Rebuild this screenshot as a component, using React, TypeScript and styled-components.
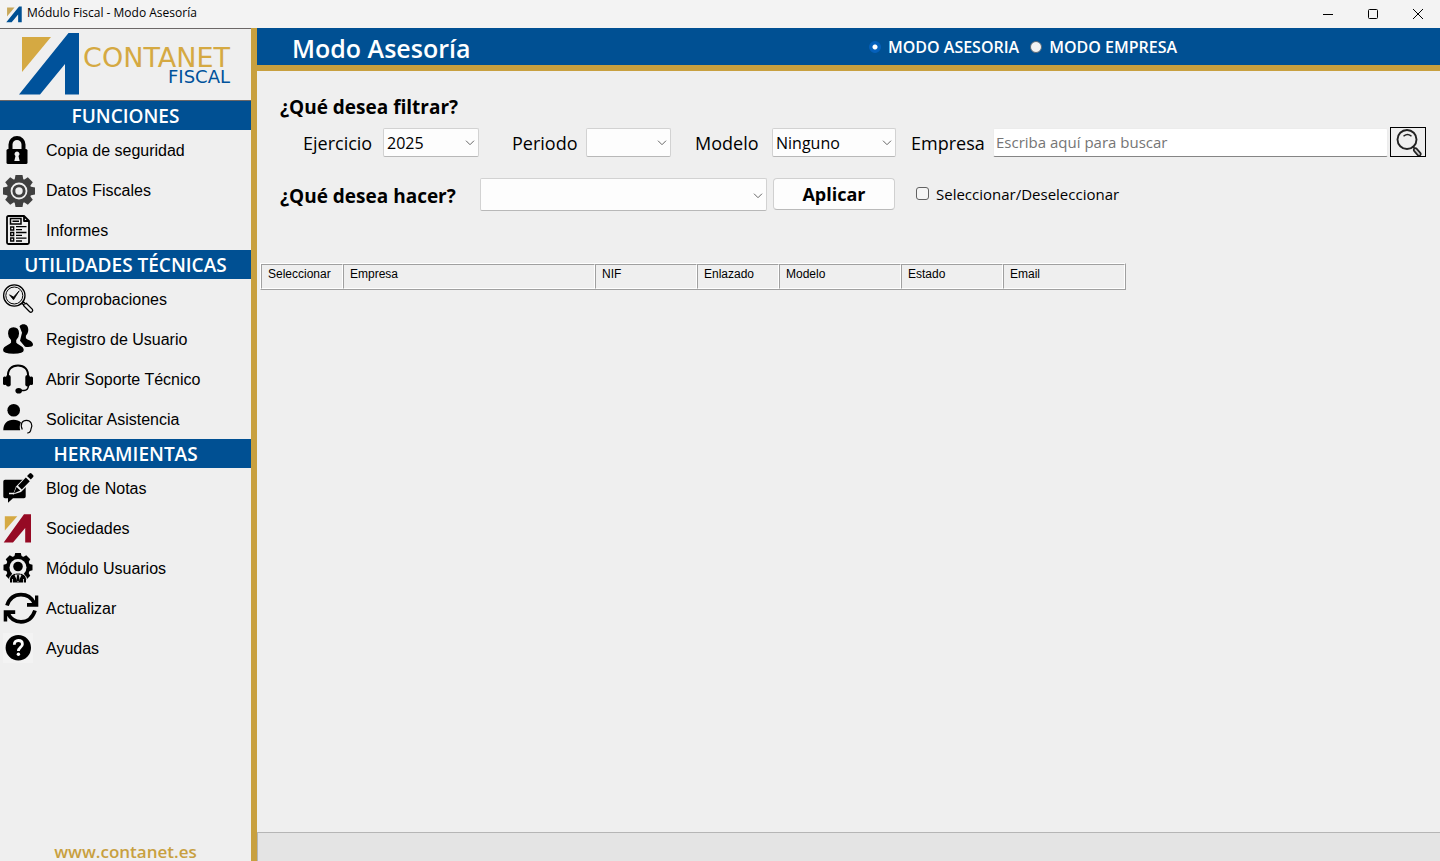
import React from 'react';
import styled, { createGlobalStyle } from 'styled-components';

const INK = '#000';
const PAPER = '#efefef';
const BLUE = '#005093';
const GOLD = '#c8a03f';
const UI = '"Segoe UI", "Open Sans", "Noto Sans", sans-serif';
const CLASSIC = '"Liberation Sans", Arial, sans-serif';

const GlobalStyle = createGlobalStyle`
  *, *::before, *::after { box-sizing: border-box; }
  body { margin: 0; background: ${PAPER}; color: ${INK}; font-family: ${UI}; }
  button, input, select { font: inherit; color: inherit; margin: 0; }
`;

const Window = styled.div`
  display: flex;
  flex-direction: column;
  height: 100vh;
  overflow: hidden;
`;

const TitleBar = styled.header`
  display: flex;
  align-items: center;
  height: 28px;
  flex: none;
  padding-left: 6px;
  background: #f3f3f3;
`;

const WindowTitle = styled.span`
  flex: 1;
  padding: 0 0 2px 5px;
  font-size: 12px;
  line-height: 16px;
  white-space: nowrap;
`;

const WindowButton = styled.button`
  display: grid;
  place-items: center;
  width: 45px;
  height: 24px;
  padding: 0;
  border: 0;
  background: none;
`;

const Body = styled.div`
  display: flex;
  flex: 1;
  min-height: 0;
`;

const Sidebar = styled.aside`
  display: flex;
  flex-direction: column;
  flex: none;
  width: 257px;
  border-right: 6px solid ${GOLD};
`;

const Brand = styled.div`
  display: flex;
  height: 73px;
  padding: 3px 0 0 18px;
  border-top: 1px solid #6b6767;
  border-bottom: 1px solid #6b6767;
`;

const BrandWords = styled.div`
  display: flex;
  flex-direction: column;
  align-items: flex-end;
  padding-top: 15px;
  width: 150px;
`;

const BrandName = styled.span`
  font: 27px/22px "DejaVu Sans", sans-serif;
  color: #d5a942;
`;

const BrandProduct = styled.span`
  font: 18px/16px "DejaVu Sans", sans-serif;
  color: #00529b;
`;

const GroupTitle = styled.h2`
  margin: 0;
  height: 29px;
  background: ${BLUE};
  color: #fff;
  font-size: 19px;
  font-weight: 600;
  line-height: 30px;
  text-align: center;
  white-space: nowrap;
`;

const NavList = styled.ul`
  margin: 0;
  padding: 0;
  list-style: none;
`;

const NavButton = styled.button`
  display: flex;
  align-items: center;
  gap: 6px;
  width: 100%;
  height: 40px;
  padding: 0;
  border: 0;
  background: none;
  font-family: ${CLASSIC};
  font-size: 16px;
  text-align: left;
`;

const NavText = styled.span`
  padding-top: 2px;
`;

const SiteLink = styled.a`
  margin-top: auto;
  height: 20px;
  color: ${GOLD};
  font-size: 17px;
  font-weight: 600;
  line-height: 22px;
  text-align: center;
  text-decoration: none;
`;

const Main = styled.main`
  display: flex;
  flex-direction: column;
  flex: 1;
  min-width: 0;
`;

const ModeBar = styled.div`
  display: grid;
  grid-template-columns: 577px auto 1fr;
  align-items: center;
  height: 43px;
  padding-left: 35px;
  border-bottom: 6px solid ${GOLD};
  background: ${BLUE};
  color: #fff;
`;

const PageTitle = styled.h1`
  margin: 0;
  padding-top: 3px;
  font-size: 25px;
  font-weight: 600;
  line-height: 34px;
`;

const ModeGroup = styled.div`
  display: flex;
  gap: 11px;
`;

const ModeLabel = styled.label`
  display: flex;
  align-items: center;
  gap: 7px;
  font-size: 16px;
  font-weight: 600;
  line-height: 20px;
  white-space: nowrap;
`;

const Radio = styled.input`
  appearance: none;
  width: 12px;
  height: 12px;
  border: 1px solid #5d6a75;
  border-radius: 50%;
  background: #f3f3f3;
  &:checked {
    border-color: #0560bb;
    background: radial-gradient(circle, #fff 2px, #0560bb 3px);
  }
`;

const Panel = styled.section`
  display: flex;
  flex-direction: column;
  padding: 21px 14px 0 23px;
`;

const Question = styled.h3`
  margin: 0;
  font-size: 19px;
  font-weight: 700;
  line-height: 30px;
  white-space: nowrap;
`;

const FilterRow = styled.div`
  display: flex;
  align-items: center;
  height: 30px;
  margin-top: 5px;
  padding-left: 23px;
`;

const ActionRow = styled.div`
  display: flex;
  align-items: flex-start;
  height: 33px;
  margin-top: 21px;
`;

const ActionQuestion = styled(Question)`
  width: 200px;
  padding-top: 3px;
`;

const FieldLabel = styled.label<{ $width: number }>`
  flex: none;
  width: ${(p) => p.$width}px;
  padding-top: 2px;
  font-size: 18px;
  line-height: 26px;
  white-space: nowrap;
`;

const SelectBox = styled.span<{ $width: number; $gap?: number; $tall?: boolean }>`
  position: relative;
  flex: none;
  width: ${(p) => p.$width}px;
  height: ${(p) => (p.$tall ? 33 : 29)}px;
  margin-right: ${(p) => p.$gap ?? 0}px;
`;

const Select = styled.select`
  appearance: none;
  width: 100%;
  height: 100%;
  padding: 2px 20px 0 3px;
  border: 1px solid #d2d2d2;
  border-bottom-color: #b8b8b8;
  border-radius: 2px;
  background: #fdfdfd;
  font-size: 16px;
`;

const Arrow = styled.svg`
  position: absolute;
  right: 4px;
  top: 50%;
  margin-top: -2px;
  pointer-events: none;
`;

const SearchInput = styled.input`
  flex: 1;
  min-width: 0;
  height: 29px;
  padding: 0 2px;
  border: 1px solid #ececec;
  border-bottom-color: #858585;
  border-radius: 2px;
  background: #fff;
  font-size: 15px;
  &::placeholder { color: #757575; opacity: 1; }
`;

const SearchButton = styled.button`
  flex: none;
  width: 36px;
  height: 30px;
  margin-left: 2px;
  padding: 0;
  border: 1px solid #000;
  background: ${PAPER};
  line-height: 0;
`;

const ApplyButton = styled.button`
  width: 122px;
  height: 32px;
  margin-left: 6px;
  padding: 0;
  border: 1px solid #d0d0d0;
  border-bottom-color: #bababa;
  border-radius: 4px;
  background: #fdfdfd;
  font-size: 18px;
  font-weight: 700;
`;

const CheckLabel = styled.label`
  display: flex;
  align-items: center;
  gap: 7px;
  height: 31px;
  margin-left: 21px;
  font-size: 15px;
  line-height: 20px;
  white-space: nowrap;
`;

const CheckBox = styled.input`
  appearance: none;
  width: 13px;
  height: 13px;
  border: 1px solid #626262;
  border-radius: 3px;
  background: #f5f5f5;
  &:checked { background: #0560bb; }
`;

const TableArea = styled.div`
  flex: 1;
  min-height: 0;
  padding: 52px 0 0 3px;
  overflow: auto;
`;

const Grid = styled.table`
  width: 866px;
  table-layout: fixed;
  border-collapse: separate;
  border-spacing: 0;
  border: 1px solid;
  border-color: #fff #a0a0a0 #a0a0a0 #fff;
  font-family: ${CLASSIC};
  font-size: 12px;
`;

const HeadCell = styled.th<{ $width: number }>`
  width: ${(p) => p.$width}px;
  height: 25px;
  padding: 2px 6px 0;
  border: 1px solid;
  border-color: #a0a0a0 #fff #fff #a0a0a0;
  font-weight: 400;
  line-height: 14px;
  text-align: left;
  vertical-align: top;
`;

const StatusBar = styled.footer`
  flex: none;
  height: 29px;
  border-top: 1px solid #b5b5b5;
  border-left: 1px solid #b5b5b5;
  background: #e4e4e4;
`;

const TEETH = [0, 45, 90, 135, 180, 225, 270, 315];

const Mark = ({ leg, sail, width, height }: { leg: string; sail: string; width: number; height: number }) => (
  <svg width={width} height={height} viewBox="0 0 62 64" aria-hidden="true">
    <path fill={sail} d="M4 5h29L4 40z" />
    <path fill={leg} d="M1 62.500 50.500 1H61v61.500H47V32L22 62.500z" />
  </svg>
);

const Chevron = () => (
  <Arrow width="10" height="6" viewBox="0 0 10 6" fill="none" stroke="#666" aria-hidden="true">
    <path d="M1 .7 5 4.700 9 .7" />
  </Arrow>
);

const icons: Record<string, React.ReactNode> = {
  lock: (
    <>
      <path d="M10.500 20v-5.500a6.500 6.500 0 0 1 13 0V20" fill="none" stroke={INK} strokeWidth="4" />
      <rect x="6.500" y="19" width="21" height="15" rx="1.500" />
      <path fill={PAPER} d="M17 21.500a2.500 2.500 0 0 1 1.500 4.500l1.200 5h-5.400l1.200-5a2.500 2.500 0 0 1 1.500-4.500z" />
    </>
  ),
  gear: (
    <g fill="#404040">
      {TEETH.map((a) => (
        <path key={a} transform={`rotate(${a} 19 21)`} d="M14.600 10 15.500 5h7L23.400 10z" />
      ))}
      <circle cx="19" cy="21" r="12.500" />
      <circle cx="19" cy="21" r="7.500" fill="none" stroke={PAPER} strokeWidth="1.800" />
      <circle cx="19" cy="21" r="3.700" fill={PAPER} />
    </g>
  ),
  report: (
    <g fill="none" stroke={INK} strokeWidth="1.500">
      <path strokeWidth="1.800" strokeLinejoin="round" d="M24 6H8.500Q7 6 7 7.500v25Q7 34 8.500 34H27.500q1.500 0 1.500-1.500V11zM24 6v5h5" />
      <path d="M10.500 8.500h10.500v5.500H10.500zM12.500 11.300h6.500" />
      <path d="M10.700 17h3v3h-3zM10.700 22.500h3v3h-3zM10.700 28h3v3h-3z" strokeWidth="1.300" />
      <path d="M16 16.700h10.500M16 19.700h6M16 22.500h10.500M16 25.300h6M16 28.200h10.500M16 31h6" strokeWidth="1.300" />
    </g>
  ),
  check: (
    <g fill="none" stroke={INK} strokeWidth="1.300">
      <circle cx="14.300" cy="16.500" r="10.700" />
      <circle cx="14.300" cy="16.500" r="8.500" strokeWidth="1" />
      <path d="m9.500 15.800 4 5 5.700-9-5.600 6.300z" fill={INK} strokeWidth=".8" />
      <path d="m21.800 24.800 1.800-1.800 1.800 1.800 1-.6 6 6.200q.8 1.400-.4 2.400-1.200.9-2.400 0l-6-6.200.4-1z" />
    </g>
  ),
  users: (
    <>
      <path d="M23.500 5.300c3 0 4.800 2.200 4.800 5.400 0 2.600-1.100 4.600-2.400 6v2.500c1.300 1.800 7 2.300 7.100 6.300 0 2.500-3.500 2.800-8 2.300l-5-6 2-8-2.500-6.500c1.200-1.500 2.500-2 4-2z" />
      <path
        stroke={PAPER}
        strokeWidth="1.500"
        d="M13.500 7.500c4 0 6.300 2.700 6.300 7 0 3-1.300 5.300-2.800 6.800v2c1.500 2.300 7.500 2.500 7.500 7.700 0 3-4.500 4.500-11 4.500s-11.200-1.500-11.200-4.500c0-5.200 6.500-5.400 8-7.700v-2c-1.600-1.500-3-3.800-3-6.800 0-4.300 2.400-7 6.200-7z"
      />
    </>
  ),
  headset: (
    <g fill="none" stroke={INK}>
      <path d="M8 17.500C7.500 10.500 11.500 6.500 18 6.500s10.500 4 10 11" strokeWidth="2" />
      <path d="M28.500 26.500q-.5 5-4.500 5h-5" strokeWidth="1.500" />
      <rect x="3" y="17.500" width="3.500" height="8.500" rx="1.500" fill={INK} stroke="none" />
      <rect x="6" y="16" width="4.700" height="11.500" rx="2" fill={INK} stroke="none" />
      <rect x="29.500" y="17.500" width="3.500" height="8.500" rx="1.500" fill={INK} stroke="none" />
      <rect x="25.300" y="16" width="4.700" height="11.500" rx="2" fill={INK} stroke="none" />
      <ellipse cx="18.700" cy="31.700" rx="3.300" ry="2.800" fill={INK} stroke="none" />
    </g>
  ),
  assist: (
    <>
      <circle cx="13.700" cy="11.300" r="6.300" />
      <path d="M3.300 31.300c0-7 4-10.600 10.200-10.600 3.300 0 5.700 1 7.500 2.700-1.500 2.300-1.500 5-.8 7.900z" />
      <path d="M22.300 30.500c-2.500-5.500 0-9.200 4.200-9.200s6.700 4.200 4.500 8.700c-.3 2.600-1 4-3.800 4" fill="none" stroke={INK} strokeWidth="1.200" />
    </>
  ),
  note: (
    <>
      <path d="M5 11.800h19q1.700 0 1.700 1.700v15q0 1.700-1.700 1.700H13l-5 4.500v-4.500H5q-1.700 0-1.700-1.700v-15q0-1.700 1.700-1.700z" />
      <path d="m13 26.500 3-8L28 6l6 5-13 13z" fill={PAPER} />
      <path d="m13.800 25.500 2.700-6.500 3.800 3.500zM18 17.800 25.800 9.500l4 3.700-8 8.300zM27 8l2.500-2.500q1-.8 2 0l1.500 1.500q1 1 .2 2l-2.400 2.600z" />
      <path d="M9 25.500h5" stroke={PAPER} strokeWidth="1.500" />
    </>
  ),
  company: (
    <>
      <path fill="#d5a942" d="M4.800 8.300h12.500L4.800 22.500z" />
      <path fill="#960a24" d="M3.700 34.500 24 6.300h7v28.200h-5.800V20L13 34.500z" />
    </>
  ),
  module: (
    <>
      {TEETH.filter((a) => a !== 180).map((a) => (
        <path key={a} transform={`rotate(${a} 18 19.500)`} d="M14 9.500 15.200 5h5.600L22 9.500z" />
      ))}
      <circle cx="18" cy="19.500" r="12" />
      <circle cx="18" cy="19.500" r="8.500" fill={PAPER} />
      <path d="M9.500 35v-3.500c0-4 3.500-6.500 8.500-6.500s8.500 2.500 8.500 6.500V35z" stroke={PAPER} strokeWidth="1" />
      <circle cx="18" cy="18.500" r="4.800" />
      <path d="M15 27 18 34l3-7zM12.500 31v4M23.500 31v4" fill={PAPER} stroke={PAPER} strokeWidth=".8" />
      <path d="m17 27.500 1-1 1 1 .6 4.500-1.600 2-1.600-2z" />
    </>
  ),
  refresh: (
    <>
      <g fill="none" stroke={INK} strokeWidth="3.800">
        <path d="M7 17.500C9.500 10 14.500 6.700 21 6.700c6 0 10.500 2.800 13.200 8.300" />
        <path d="M35 22.500c-2.500 7.500-7.500 11.300-14 11.300-6 0-10.500-3-13.200-8.800" />
      </g>
      <path d="M38.300 7.500v11.200H27v-3.600h5.200L35 12.500V7.500zM3.700 33.500V22.300h11.500v3.600H10l-2.800 2.600v5z" />
    </>
  ),
  help: (
    <>
      <path fill="#f3f3f3" d="M3 5h30v30H3z" />
      <circle cx="18.300" cy="19.700" r="12.700" />
      <path d="M14.300 16.800c0-2.800 1.700-4.300 4-4.300s4.100 1.400 4.100 3.700c0 3-4 3.200-4 6.800" fill="none" stroke="#fff" strokeWidth="2.800" />
      <circle cx="18.400" cy="26.300" r="1.700" fill="#fff" />
    </>
  ),
};

const NavIcon = ({ name }: { name: string }) => (
  <svg width="40" height="40" viewBox="0 0 40 40" aria-hidden="true">
    {icons[name]}
  </svg>
);

const GROUPS = [
  {
    title: 'FUNCIONES',
    items: [
      ['lock', 'Copia de seguridad'],
      ['gear', 'Datos Fiscales'],
      ['report', 'Informes'],
    ],
  },
  {
    title: 'UTILIDADES TÉCNICAS',
    items: [
      ['check', 'Comprobaciones'],
      ['users', 'Registro de Usuario'],
      ['headset', 'Abrir Soporte Técnico'],
      ['assist', 'Solicitar Asistencia'],
    ],
  },
  {
    title: 'HERRAMIENTAS',
    items: [
      ['note', 'Blog de Notas'],
      ['company', 'Sociedades'],
      ['module', 'Módulo Usuarios'],
      ['refresh', 'Actualizar'],
      ['help', 'Ayudas'],
    ],
  },
];

const COLUMNS: [string, number][] = [
  ['Seleccionar', 82],
  ['Empresa', 252],
  ['NIF', 102],
  ['Enlazado', 82],
  ['Modelo', 122],
  ['Estado', 102],
  ['Email', 122],
];

export default function App() {
  return (
    <Window>
      <GlobalStyle />
      <TitleBar>
        <Mark leg={BLUE} sail="#c8a85a" width={16} height={17} />
        <WindowTitle>Módulo Fiscal - Modo Asesoría</WindowTitle>
        <WindowButton aria-label="Minimizar">
          <svg width="12" height="12" stroke="#000"><path d="M1 6.500h10" /></svg>
        </WindowButton>
        <WindowButton aria-label="Maximizar">
          <svg width="12" height="12" stroke="#000" fill="none"><rect x="1.500" y="1.500" width="9" height="9" rx="1" /></svg>
        </WindowButton>
        <WindowButton aria-label="Cerrar">
          <svg width="12" height="12" stroke="#000"><path d="m1 1 10 10M11 1 1 11" /></svg>
        </WindowButton>
      </TitleBar>
      <Body>
        <Sidebar>
          <Brand>
            <Mark leg="#00529b" sail="#d5a942" width={62} height={64} />
            <BrandWords>
              <BrandName>CONTANET</BrandName>
              <BrandProduct>FISCAL</BrandProduct>
            </BrandWords>
          </Brand>
          {GROUPS.map((group) => (
            <nav key={group.title} aria-label={group.title}>
              <GroupTitle>{group.title}</GroupTitle>
              <NavList>
                {group.items.map(([icon, text]) => (
                  <li key={text}>
                    <NavButton>
                      <NavIcon name={icon} />
                      <NavText>{text}</NavText>
                    </NavButton>
                  </li>
                ))}
              </NavList>
            </nav>
          ))}
          <SiteLink href="#contanet">www.contanet.es</SiteLink>
        </Sidebar>
        <Main>
          <ModeBar>
            <PageTitle>Modo Asesoría</PageTitle>
            <ModeGroup role="radiogroup" aria-label="Modo">
              <ModeLabel>
                <Radio type="radio" name="modo" defaultChecked />
                MODO ASESORIA
              </ModeLabel>
              <ModeLabel>
                <Radio type="radio" name="modo" />
                MODO EMPRESA
              </ModeLabel>
            </ModeGroup>
          </ModeBar>
          <Panel>
            <Question>¿Qué desea filtrar?</Question>
            <FilterRow>
              <FieldLabel htmlFor="ejercicio" $width={80}>Ejercicio</FieldLabel>
              <SelectBox $width={96} $gap={33}>
                <Select id="ejercicio"><option>2025</option></Select>
                <Chevron />
              </SelectBox>
              <FieldLabel htmlFor="periodo" $width={74}>Periodo</FieldLabel>
              <SelectBox $width={85} $gap={24}>
                <Select id="periodo"><option /></Select>
                <Chevron />
              </SelectBox>
              <FieldLabel htmlFor="modelo" $width={77}>Modelo</FieldLabel>
              <SelectBox $width={124} $gap={15}>
                <Select id="modelo"><option>Ninguno</option></Select>
                <Chevron />
              </SelectBox>
              <FieldLabel htmlFor="empresa" $width={82}>Empresa</FieldLabel>
              <SearchInput id="empresa" type="text" placeholder="Escriba aquí para buscar" />
              <SearchButton aria-label="Buscar">
                <svg width="34" height="28" viewBox="0 0 34 28" fill="none" stroke="#222" strokeLinecap="round">
                  <circle cx="16" cy="11.500" r="9.500" strokeWidth="1.900" />
                  <path d="M13 7.800q3.500-2.800 7 0" strokeWidth="1.500" />
                  <path d="m22 18.500 1.500 2" strokeWidth="1.500" />
                  <path d="m24.500 22 3.500 4" strokeWidth="5" />
                  <path d="m24.500 22 3.500 4" strokeWidth="1.800" stroke="#ccc" />
                </svg>
              </SearchButton>
            </FilterRow>
            <ActionRow>
              <ActionQuestion as="label" htmlFor="accion">¿Qué desea hacer?</ActionQuestion>
              <SelectBox $width={287} $tall>
                <Select id="accion"><option /></Select>
                <Chevron />
              </SelectBox>
              <ApplyButton>Aplicar</ApplyButton>
              <CheckLabel>
                <CheckBox type="checkbox" />
                Seleccionar/Deseleccionar
              </CheckLabel>
            </ActionRow>
          </Panel>
          <TableArea>
            <Grid>
              <thead>
                <tr>
                  {COLUMNS.map(([name, width]) => (
                    <HeadCell key={name} $width={width} scope="col">{name}</HeadCell>
                  ))}
                </tr>
              </thead>
            </Grid>
          </TableArea>
          <StatusBar />
        </Main>
      </Body>
    </Window>
  );
}
